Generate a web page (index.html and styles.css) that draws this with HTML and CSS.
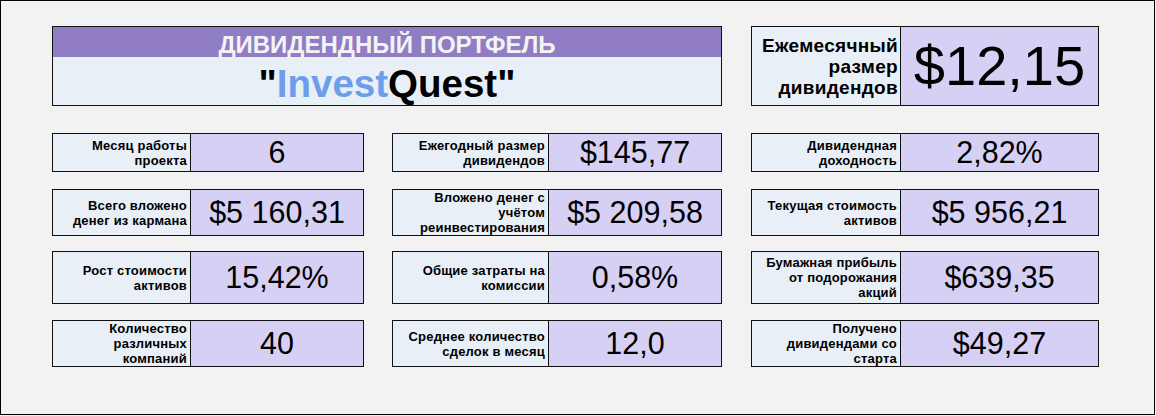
FILE: index.html
```html
<!DOCTYPE html>
<html lang="ru">
<head>
<meta charset="utf-8">
<title>Дивидендный портфель</title>
<link rel="stylesheet" href="styles.css">
</head>
<body>
<div class="frame">
  <div class="board">
    <div class="title-card">
      <div class="title-band">ДИВИДЕНДНЫЙ ПОРТФЕЛЬ</div>
      <div class="title-name">"<span class="invest">Invest</span>Quest"</div>
    </div>
    <div class="card col3 big">
      <div class="label big-label">Ежемесячный размер дивидендов</div>
      <div class="value big-value">$12,15</div>
    </div>

    <div class="card col1 r1"><div class="label">Месяц работы проекта</div><div class="value">6</div></div>
    <div class="card col2 r1"><div class="label">Ежегодный размер дивидендов</div><div class="value">$145,77</div></div>
    <div class="card col3 r1"><div class="label">Дивидендная доходность</div><div class="value">2,82%</div></div>

    <div class="card col1 r2"><div class="label">Всего вложено денег из кармана</div><div class="value">$5 160,31</div></div>
    <div class="card col2 r2"><div class="label">Вложено денег с учётом реинвестирования</div><div class="value">$5 209,58</div></div>
    <div class="card col3 r2"><div class="label">Текущая стоимость активов</div><div class="value">$5 956,21</div></div>

    <div class="card col1 r3"><div class="label">Рост стоимости активов</div><div class="value">15,42%</div></div>
    <div class="card col2 r3"><div class="label">Общие затраты на комиссии</div><div class="value">0,58%</div></div>
    <div class="card col3 r3"><div class="label">Бумажная прибыль от подорожания акций</div><div class="value">$639,35</div></div>

    <div class="card col1 r4"><div class="label">Количество различных компаний</div><div class="value">40</div></div>
    <div class="card col2 r4"><div class="label">Среднее количество сделок в месяц</div><div class="value">12,0</div></div>
    <div class="card col3 r4"><div class="label">Получено дивидендами со старта</div><div class="value">$49,27</div></div>
  </div>
</div>
</body>
</html>
```
FILE: styles.css
```css
* { box-sizing: border-box; }
html, body { margin: 0; padding: 0; background: #f2f2f2; }
body { font-family: "Liberation Sans", Arial, sans-serif; color: #000; }

.frame {
  width: 1155px;
  height: 415px;
  border: 1px solid #000;
  background: #f2f2f2;
  padding: 25px 0 0 51px;
}

.board {
  display: grid;
  grid-template-columns: 312px 330px 349px;
  grid-template-rows: 92px 41px 47px 54px 47px;
  column-gap: 28px;
  row-gap: 15px;
  align-items: start;
}

.title-card {
  grid-column: 1 / 3;
  height: 80px;
  border: 1px solid #111;
  display: flex;
  flex-direction: column;
  background: #e8eff7;
}
.title-band {
  height: 30px;
  background: #917dc4;
  color: #f3f3f3;
  font-weight: bold;
  font-size: 24px;
  line-height: 25px;
  padding-top: 5px;
  text-align: center;
}
.title-name {
  flex: 1;
  display: flex;
  align-items: center;
  justify-content: center;
  font-weight: bold;
  font-size: 38.5px;
  padding-top: 5px;
}
.invest { color: #6d9eeb; }

.card {
  border: 1px solid #111;
  display: grid;
  background: #d6d0f5;
}
.col1 { grid-column: 1; grid-template-columns: 138px 1fr; }
.col2 { grid-column: 2; grid-template-columns: 156px 1fr; }
.col3 { grid-column: 3; grid-template-columns: 149px 1fr; margin-left: 1px; width: 348px; }

.big { height: 80px; }
.r1 { height: 39px; }
.r2 { height: 47px; }
.r3 { height: 53px; }
.r4 { height: 47px; }

.label {
  background: #e8eff7;
  border-right: 1px solid #111;
  display: flex;
  align-items: center;
  justify-content: flex-end;
  text-align: right;
  padding: 0 3px 0 4px;
  font-size: 13px;
  letter-spacing: 0.2px;
  font-weight: bold;
  line-height: 15px;
}
.value {
  display: flex;
  align-items: center;
  justify-content: center;
  font-size: 30.5px;
  line-height: 1;
}
.big-label {
  font-size: 19px;
  letter-spacing: 0.3px;
  line-height: 21px;
  padding-right: 2px;
}
.big-value {
  font-size: 56px;
}
```
